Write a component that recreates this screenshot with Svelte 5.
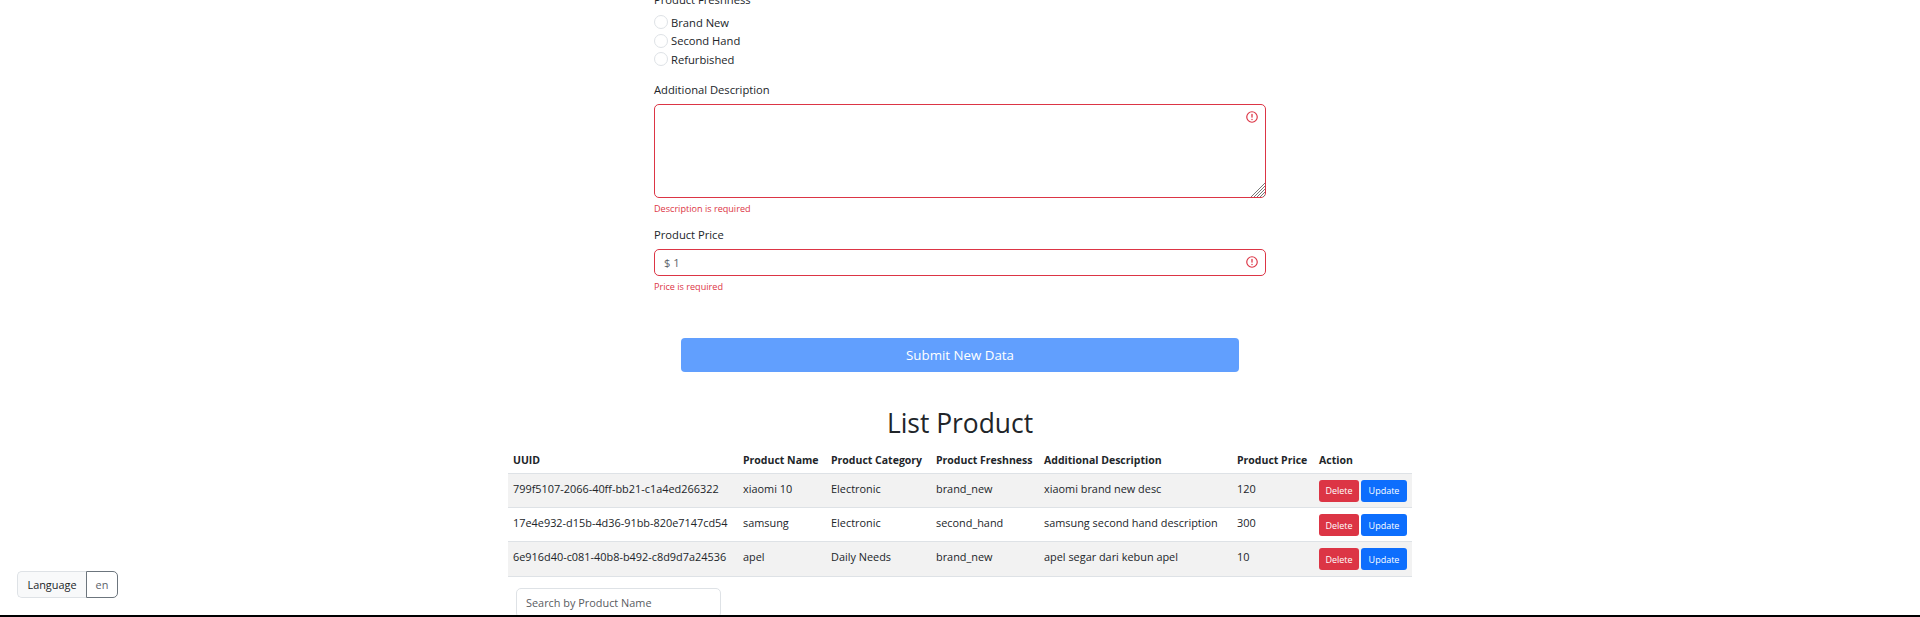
<script>
  const rows = [
    { id: '799f5107-2066-40ff-bb21-c1a4ed266322', name: 'xiaomi 10', category: 'Electronic', freshness: 'brand_new', desc: 'xiaomi brand new desc', price: '120' },
    { id: '17e4e932-d15b-4d36-91bb-820e7147cd54', name: 'samsung', category: 'Electronic', freshness: 'second_hand', desc: 'samsung second hand description', price: '300' },
    { id: '6e916d40-c081-40b8-b492-c8d9d7a24536', name: 'apel', category: 'Daily Needs', freshness: 'brand_new', desc: 'apel segar dari kebun apel', price: '10' }
  ];
  // column widths follow the content widths of the original table
  const heads = [
    { label: 'UUID', width: 230 },
    { label: 'Product Name', width: 88 },
    { label: 'Product Category', width: 105 },
    { label: 'Product Freshness', width: 108 },
    { label: 'Additional Description', width: 193 },
    { label: 'Product Price', width: 82 },
    { label: 'Action', width: 98 }
  ];
</script>

{#snippet alertIcon()}
  <svg class="alert" viewBox="0 0 12 12" aria-hidden="true">
    <circle cx="6" cy="6" r="4.5" fill="none" stroke="#dc3545" />
    <path d="M5.8 3.6h.4L6 6.5z" fill="#dc3545" stroke="#dc3545" stroke-width="0.6" />
    <circle cx="6" cy="8.2" r="0.6" fill="#dc3545" />
  </svg>
{/snippet}

<div class="page">
  <main>
    <form class="form">
      <div class="label">Product Freshness</div>
      <div class="radios">
        <label class="radio"><span class="dot"></span>Brand New</label>
        <label class="radio"><span class="dot"></span>Second Hand</label>
        <label class="radio"><span class="dot"></span>Refurbished</label>
      </div>

      <div class="label">Additional Description</div>
      <div class="field area">
        {@render alertIcon()}
        <svg class="grip" viewBox="0 0 14 14" aria-hidden="true">
          <path d="M14 0 0 14M14 3 3 14M14 6 6 14M14 9 9 14M14 12 12 14" stroke="#777" fill="none" />
        </svg>
      </div>
      <div class="error">Description is required</div>

      <div class="label price">Product Price</div>
      <div class="field input">
        <span>$ 1</span>
        {@render alertIcon()}
      </div>
      <div class="error">Price is required</div>

      <button type="button" class="submit">Submit New Data</button>
    </form>

    <h2>List Product</h2>

    <table>
      <colgroup>
        {#each heads as h}<col style="width: {h.width}px" />{/each}
      </colgroup>
      <thead>
        <tr>
          {#each heads as h}<th>{h.label}</th>{/each}
        </tr>
      </thead>
      <tbody>
        {#each rows as r}
          <tr>
            <td>{r.id}</td>
            <td>{r.name}</td>
            <td>{r.category}</td>
            <td>{r.freshness}</td>
            <td>{r.desc}</td>
            <td>{r.price}</td>
            <td class="actions">
              <div class="btns">
                <button type="button" class="btn del">Delete</button>
                <button type="button" class="btn upd">Update</button>
              </div>
            </td>
          </tr>
        {/each}
      </tbody>
    </table>

    <div class="search">Search by Product Name</div>
  </main>

  <div class="lang">
    <span class="lang-name">Language</span>
    <span class="lang-value">en</span>
  </div>
  <div class="edge"></div>
</div>

<style>
  :global(body) {
    margin: 0;
    background: #fff;
  }
  .page {
    position: relative;
    height: 617px;
    overflow: hidden;
    font-family: "Open Sans", "Noto Sans", sans-serif;
    color: #212529;
    font-size: 10.9px;
  }
  main {
    display: flex;
    flex-direction: column;
    align-items: center;
    margin-top: -8px;
  }
  .form {
    width: 612px;
    display: flex;
    flex-direction: column;
  }
  .label {
    font-size: 11.2px;
    line-height: 16px;
  }
  .radios {
    display: flex;
    flex-direction: column;
    margin-top: 5px;
    margin-bottom: 13px;
    font-size: 11.2px;
  }
  .radio {
    display: flex;
    align-items: center;
    gap: 3px;
    height: 18.5px;
  }
  .dot {
    width: 12px;
    height: 12px;
    border: 1px solid #dee2e6;
    border-radius: 50%;
  }
  .field {
    position: relative;
    box-sizing: border-box;
    border: 1px solid #dc3545;
    border-radius: 5px;
  }
  .area {
    height: 94px;
    margin-top: 6px;
  }
  .input {
    height: 27px;
    margin-top: 6px;
    padding: 0 9px;
    display: flex;
    align-items: center;
    color: #5c636a;
    font-size: 11.2px;
  }
  .alert {
    position: absolute;
    top: 5px;
    right: 6px;
    width: 14px;
    height: 14px;
  }
  .grip {
    position: absolute;
    right: 0;
    bottom: 0;
    width: 14px;
    height: 14px;
  }
  .error {
    margin-top: 4px;
    font-size: 9.1px;
    line-height: 14px;
    color: #dc3545;
  }
  .price {
    margin-top: 11px;
  }
  .submit {
    align-self: center;
    width: 558px;
    height: 34px;
    margin-top: 44px;
    border: 0;
    border-radius: 4px;
    background: #619ffe;
    color: #fff;
    font: inherit;
    font-size: 13.3px;
  }
  h2 {
    margin: 33px 0 0;
    font-size: 26.4px;
    font-weight: 400;
    line-height: 37px;
  }
  table {
    width: 904px;
    margin-top: 5px;
    border-collapse: collapse;
    table-layout: fixed;
  }
  th {
    height: 26px;
    padding: 0 5px;
    text-align: left;
    font-size: 10.5px;
    font-weight: 700;
    white-space: nowrap;
    border-bottom: 1px solid #dee2e6;
  }
  td {
    box-sizing: border-box;
    height: 34.4px;
    padding: 0 5px 4px;
    white-space: nowrap;
    border-bottom: 1px solid #dee2e6;
  }
  tbody tr:nth-child(odd) {
    background: #f2f2f2;
  }
  .actions {
    padding: 1px 5px 0;
  }
  .btns {
    display: flex;
    gap: 2px;
  }
  .btn {
    height: 22px;
    padding: 0;
    border: 0;
    border-radius: 3px;
    color: #fff;
    font: inherit;
    font-size: 9px;
  }
  .del {
    width: 40px;
    background: #dc3545;
  }
  .upd {
    width: 46px;
    background: #0d6efd;
  }
  .search {
    align-self: flex-start;
    box-sizing: border-box;
    width: 205px;
    height: 30px;
    margin-left: 516px;
    margin-top: 11px;
    padding: 6px 9px;
    border: 1px solid #dee2e6;
    border-radius: 5px;
    color: #595c5f;
  }
  .lang {
    position: absolute;
    left: 17px;
    top: 571px;
    display: flex;
    height: 27px;
    line-height: 25px;
    box-sizing: border-box;
  }
  .lang-name {
    box-sizing: border-box;
    width: 69px;
    text-align: center;
    background: #f8f9fa;
    border: 1px solid #dee2e6;
    border-right: 0;
    border-radius: 5px 0 0 5px;
  }
  .lang-value {
    box-sizing: border-box;
    width: 32px;
    text-align: center;
    color: #5c636a;
    border: 1px solid #6c757d;
    border-radius: 0 5px 5px 0;
  }
  .edge {
    position: absolute;
    left: 0;
    right: 0;
    bottom: 0;
    height: 2px;
    background: #000;
  }
</style>
